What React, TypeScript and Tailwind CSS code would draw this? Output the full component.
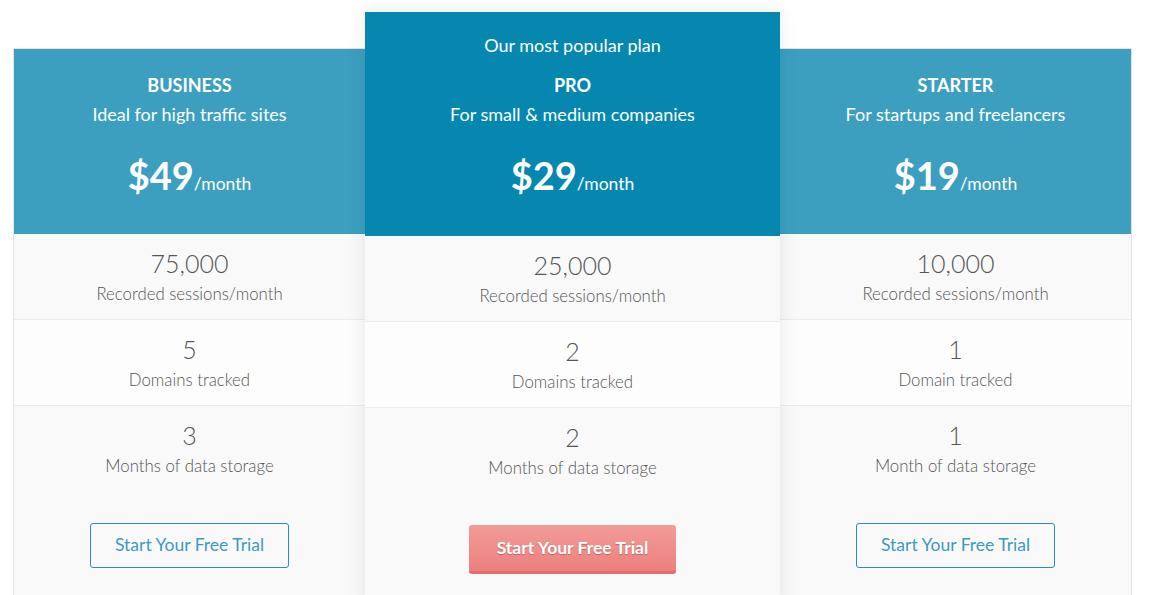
import React from 'react';

type Plan = {
  name: string;
  tagline: string;
  price: string;
  sessions: string;
  domains: string;
  domainLabel: string;
  months: string;
  monthLabel: string;
};

const business: Plan = {
  name: 'BUSINESS',
  tagline: 'Ideal for high traffic sites',
  price: '$49',
  sessions: '75,000',
  domains: '5',
  domainLabel: 'Domains tracked',
  months: '3',
  monthLabel: 'Months of data storage',
};

const pro: Plan = {
  name: 'PRO',
  tagline: 'For small & medium companies',
  price: '$29',
  sessions: '25,000',
  domains: '2',
  domainLabel: 'Domains tracked',
  months: '2',
  monthLabel: 'Months of data storage',
};

const starter: Plan = {
  name: 'STARTER',
  tagline: 'For startups and freelancers',
  price: '$19',
  sessions: '10,000',
  domains: '1',
  domainLabel: 'Domain tracked',
  months: '1',
  monthLabel: 'Month of data storage',
};

function Header({ plan, popular }: { plan: Plan; popular?: boolean }) {
  return (
    <div
      className={
        popular
          ? 'flex flex-col items-center bg-[#0587b0] pt-[22px] pb-[37px] text-white'
          : 'flex flex-col items-center bg-[#3c9fc0] pt-[25px] pb-[35px] text-white'
      }
    >
      {popular && <div className="mb-[18px] text-[18px] leading-[22px]">Our most popular plan</div>}
      <div className="text-[18px] font-bold leading-[22px]">{plan.name}</div>
      <div className="mt-[5px] text-[18px] leading-[26px]">{plan.tagline}</div>
      <div className="mt-[24px] h-[48px] text-center leading-[48px]">
        <span className="text-[38px] font-bold">{plan.price}</span>
        <span className="text-[17.5px]">/month</span>
      </div>
    </div>
  );
}

function Row({ value, label, white }: { value: string; label: string; white?: boolean }) {
  return (
    <div
      className={
        white
          ? 'flex h-[86px] flex-col items-center border-b border-[#ececec] bg-[#fdfdfd] pt-[14px]'
          : 'flex h-[86px] flex-col items-center border-b border-[#ececec] bg-[#f9f9f9] pt-[14px]'
      }
    >
      <div className="text-[25px] font-light leading-[30px] text-[#555]">{value}</div>
      <div className="mt-[4px] text-[16.8px] font-light leading-[24px] text-[#555]">{label}</div>
    </div>
  );
}

function Body({ plan, popular }: { plan: Plan; popular?: boolean }) {
  return (
    <div>
      <Row value={plan.sessions} label="Recorded sessions/month" />
      <Row value={plan.domains} label={plan.domainLabel} white />
      <div className="flex h-[200px] flex-col items-center bg-[#f9f9f9] pt-[14px]">
        <div className="text-[25px] font-light leading-[30px] text-[#555]">{plan.months}</div>
        <div className="mt-[4px] text-[16.8px] font-light leading-[24px] text-[#555]">{plan.monthLabel}</div>
        {popular ? (
          <button className="mt-[45px] h-[49px] w-[207px] rounded-[3px] border-b-[3px] border-[#e16f6f] bg-gradient-to-b from-[#f29c99] to-[#ec7f7d] text-[17.5px] font-bold text-white [text-shadow:0_1px_1px_rgba(0,0,0,0.25)]">
            Start Your Free Trial
          </button>
        ) : (
          <button className="mt-[45px] h-[45px] w-[199px] rounded-[3px] border border-[#2a8fb8] bg-transparent text-[17.5px] text-[#3b9bc1]">
            Start Your Free Trial
          </button>
        )}
      </div>
    </div>
  );
}

export default function App() {
  return (
    <div className="h-[595px] overflow-hidden bg-white font-['Lato',sans-serif]">
      <div className="flex items-start pl-[13px]">
        <div className="mt-[48px] w-[352px] border-l border-t border-[#e2e2e2]">
          <Header plan={business} />
          <Body plan={business} />
        </div>
        <div className="relative z-10 mt-[12px] w-[415px] shadow-[0_0_18px_rgba(0,0,0,0.09)]">
          <Header plan={pro} popular />
          <Body plan={pro} popular />
        </div>
        <div className="mt-[48px] w-[352px] border-r border-t border-[#e2e2e2]">
          <Header plan={starter} />
          <Body plan={starter} />
        </div>
      </div>
    </div>
  );
}
